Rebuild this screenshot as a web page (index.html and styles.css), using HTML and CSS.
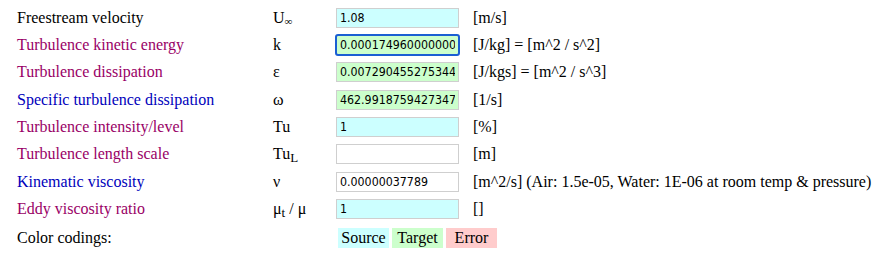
FILE: index.html
```html
<!DOCTYPE html>
<html lang="en">
<head>
    <meta charset="UTF-8">
    <title>Turbulence Properties</title>
    <link rel="stylesheet" href="styles.css">
</head>
<body>
    <div class="calc">
        <div class="label">Freestream velocity</div>
        <div class="sym">U<sub class="inf">&infin;</sub></div>
        <div><input class="field source" type="text" value="1.08"></div>
        <div class="unit">[m/s]</div>

        <div class="label purple">Turbulence kinetic energy</div>
        <div class="sym">k</div>
        <div><input class="field target focus" type="text" value="0.00017496000000000"></div>
        <div class="unit">[J/kg] = [m^2 / s^2]</div>

        <div class="label purple">Turbulence dissipation</div>
        <div class="sym">&epsilon;</div>
        <div><input class="field target" type="text" value="0.0072904552753440"></div>
        <div class="unit">[J/kgs] = [m^2 / s^3]</div>

        <div class="label blue">Specific turbulence dissipation</div>
        <div class="sym">&omega;</div>
        <div><input class="field target" type="text" value="462.99187594273474"></div>
        <div class="unit">[1/s]</div>

        <div class="label purple">Turbulence intensity/level</div>
        <div class="sym">Tu</div>
        <div><input class="field source" type="text" value="1"></div>
        <div class="unit">[%]</div>

        <div class="label purple">Turbulence length scale</div>
        <div class="sym">Tu<sub>L</sub></div>
        <div><input class="field" type="text" value=""></div>
        <div class="unit">[m]</div>

        <div class="label blue">Kinematic viscosity</div>
        <div class="sym">&nu;</div>
        <div><input class="field" type="text" value="0.00000037789"></div>
        <div class="unit">[m^2/s] (Air: 1.5e-05, Water: 1E-06 at room temp &amp; pressure)</div>

        <div class="label purple">Eddy viscosity ratio</div>
        <div class="sym">&mu;<sub>t</sub> / &mu;</div>
        <div><input class="field source" type="text" value="1"></div>
        <div class="unit">[]</div>

        <div class="label last">Color codings:</div>
        <div class="last"></div>
        <div class="legend last">
            <span class="chip source">Source</span>
            <span class="chip target">Target</span>
            <span class="chip error">Error</span>
        </div>
        <div class="last"></div>
    </div>
</body>
</html>
```

FILE: styles.css
```css
body {
    margin: 0;
    font-family: "Liberation Serif", "Times New Roman", serif;
    font-size: 16px;
    color: #000;
    background: #fff;
}

.calc {
    display: grid;
    grid-template-columns: 256px 63px 137px auto;
    grid-auto-rows: 27.33px;
    align-items: center;
    padding: 4px 0 0 17px;
    white-space: nowrap;
}

.purple {
    color: #990066;
}

.blue {
    color: #0000bb;
}

.sym sub {
    font-size: 13px;
    vertical-align: -3px;
    line-height: 0;
}

.sym sub.inf {
    font-size: 11px;
    vertical-align: -2px;
}

.field {
    box-sizing: border-box;
    width: 123px;
    height: 20px;
    margin: 0;
    padding: 0 3px;
    border: 1px solid #cfcfcf;
    font-family: "DejaVu Sans Condensed", "DejaVu Sans", sans-serif;
    font-stretch: condensed;
    font-size: 12.3px;
    color: #000;
    background: #fff;
    display: block;
}

.field.focus {
    outline: 2px solid #1a5fd3;
    outline-offset: -1px;
    border-radius: 2px;
}

.source {
    background: #ccffff;
}

.target {
    background: #ccffcc;
}

.error {
    background: #ffcccc;
}

.last {
    margin-top: 4px;
}

.legend {
    display: flex;
    gap: 3px;
    padding-left: 2px;
}

.chip {
    flex: none;
    width: 51px;
    height: 20px;
    line-height: 20px;
    text-align: center;
}
```
